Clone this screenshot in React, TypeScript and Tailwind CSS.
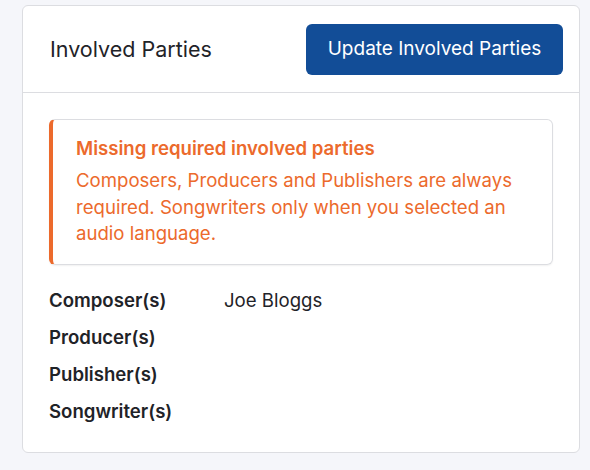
const parties = [
  { label: 'Composer(s)', value: 'Joe Bloggs' },
  { label: 'Producer(s)', value: '' },
  { label: 'Publisher(s)', value: '' },
  { label: 'Songwriter(s)', value: '' },
];

export default function App() {
  return (
    <div
      className="min-h-[470px] w-[590px] bg-[#f5f6fa] pl-[22px] pr-[10px] pt-[5px]"
      style={{ fontFamily: 'Inter, "Noto Sans", sans-serif' }}
    >
      <div className="h-[448px] rounded-md border border-[#dcdde1] bg-white">
        {/* Header */}
        <div className="flex h-[87px] items-center justify-between border-b border-[#dcdde1] pl-[27px] pr-[16px]">
          <h2 className="text-[21.5px] text-[#1f2328]">Involved Parties</h2>
          <button className="h-[51px] w-[257px] rounded-md bg-[#124d97] text-[19px] text-white">
            Update Involved Parties
          </button>
        </div>

        <div className="px-[26px] pt-[26px]">
          {/* Warning */}
          <div className="rounded-md border border-l-4 border-[#dcdde1] border-l-[#ec6a2c] pb-[17px] pl-[23px] pr-4 pt-[15px] shadow-[0_1px_2px_rgba(0,0,0,0.06)]">
            <p className="text-[18.6px] font-semibold leading-[26.5px] text-[#ec6a2c]">
              Missing required involved parties
            </p>
            <p className="mt-[5.5px] text-[18.6px] leading-[26.5px] text-[#ec6a2c]">
              Composers, Producers and Publishers are always required. Songwriters only when you
              selected an audio language.
            </p>
          </div>

          {/* Parties list */}
          <div className="mt-[22px] flex flex-col gap-[10.5px]">
            {parties.map((p) => (
              <div key={p.label} className="flex text-[18.6px] leading-[26.5px] text-[#1f2328]">
                <span className="w-[175px] font-semibold">{p.label}</span>
                <span>{p.value}</span>
              </div>
            ))}
          </div>
        </div>
      </div>
    </div>
  );
}
